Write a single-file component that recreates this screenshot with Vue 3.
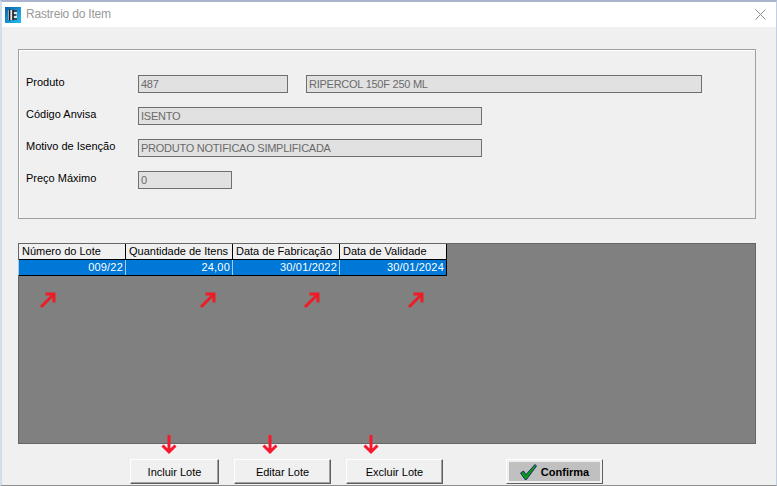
<script setup>
const columns = [
  { title: 'Número do Lote', value: '009/22' },
  { title: 'Quantidade de Itens', value: '24,00' },
  { title: 'Data de Fabricação', value: '30/01/2022' },
  { title: 'Data de Validade', value: '30/01/2024' }
]

const diagonalArrows = [38, 198, 302, 406]
const downArrows = [161, 262, 363]
const lotButtons = [
  { label: 'Incluir Lote', cls: 'btn-a' },
  { label: 'Editar Lote', cls: 'btn-b' },
  { label: 'Excluir Lote', cls: 'btn-b' }
]
</script>

<template>
  <div class="window">
    <header class="titlebar">
      <svg class="app-icon" width="16" height="16" viewBox="0 0 16 16">
        <defs>
          <linearGradient id="iconBg" x1="0" y1="0" x2="1" y2="1">
            <stop offset="0" stop-color="#0a5fa8" />
            <stop offset="1" stop-color="#22c0f4" />
          </linearGradient>
        </defs>
        <rect width="16" height="16" fill="url(#iconBg)" />
        <rect x="3" y="3" width="9" height="10" fill="#dfe6ea" />
        <path d="M4.5 2.5V13.5M8 3V13M8 4H12M8 8H11.5M8 12H12" stroke="#101c28" stroke-width="1.6" fill="none" />
      </svg>
      <span class="title">Rastreio do Item</span>
      <svg class="close" width="11" height="11" viewBox="0 0 11 11">
        <path d="M0.5 0.5L10.5 10.5M10.5 0.5L0.5 10.5" stroke="#8a8a8a" stroke-width="1" fill="none" />
      </svg>
    </header>

    <main class="content">
      <section class="group">
        <div class="row">
          <label>Produto</label>
          <div class="field w150">487</div>
          <div class="field w396 gap18">RIPERCOL 150F 250 ML</div>
        </div>
        <div class="row">
          <label>Código Anvisa</label>
          <div class="field w344">ISENTO</div>
        </div>
        <div class="row">
          <label>Motivo de Isenção</label>
          <div class="field w344">PRODUTO NOTIFICAO SIMPLIFICADA</div>
        </div>
        <div class="row">
          <label>Preço Máximo</label>
          <div class="field w94">0</div>
        </div>
      </section>

      <section class="grid">
        <div class="table">
          <div v-for="col in columns" :key="col.title" class="col">
            <div class="head">{{ col.title }}</div>
            <div class="cell">{{ col.value }}</div>
          </div>
        </div>
        <svg
          v-for="x in diagonalArrows"
          :key="x"
          class="arrow-diag"
          :style="{ left: x - 18 + 'px' }"
          width="18"
          height="18"
          viewBox="0 0 18 18"
        >
          <path d="M2 16L15 3M6.5 3H15V11.5" stroke="#ee1c25" stroke-width="3" fill="none" />
        </svg>
      </section>

      <footer class="actions">
        <button v-for="b in lotButtons" :key="b.label" class="btn" :class="b.cls">{{ b.label }}</button>
        <button class="btn confirm">
          <svg width="17" height="16" viewBox="0 0 17 16">
            <path d="M0.5 9L3.5 7L6 10.5L15 0.5L16.5 2L6.5 15.5H5Z" fill="#0c9a1c" stroke="#10106a" stroke-width="0.8" />
          </svg>
          <span>Confirma</span>
        </button>
      </footer>

      <svg
        v-for="x in downArrows"
        :key="x"
        class="arrow-down"
        :style="{ left: x - 2 + 'px' }"
        width="16"
        height="20"
        viewBox="0 0 16 20"
      >
        <path d="M8 0V17M1.5 10.5L8 17L14.5 10.5" stroke="#f8172c" stroke-width="3" fill="none" />
      </svg>
    </main>
  </div>
</template>

<style>
html, body {
  margin: 0;
  background: #f0f0f0;
}
</style>

<style scoped>
.window {
  position: relative;
  width: 777px;
  height: 486px;
  box-sizing: border-box;
  overflow: hidden;
  border-top: 2px solid #a9b5cf;
  border-left: 2px solid #d3deec;
  border-right: 1px solid #c3cfe0;
  border-bottom: 1px solid #8f8f8f;
  background: #f0f0f0;
  font-family: "Liberation Sans", Arial, sans-serif;
  font-size: 11px;
  color: #000;
}

.titlebar {
  display: flex;
  align-items: center;
  height: 25px;
  padding: 0 10px 0 3px;
  background: #fff;
}

.app-icon {
  flex: none;
}

.title {
  margin: -1px 0 0 5px;
  color: #999;
  font-size: 12px;
  letter-spacing: -0.2px;
}

.close {
  margin-left: auto;
}

.content {
  padding: 22px 20px 0 16px;
}

.group {
  box-sizing: border-box;
  height: 170px;
  padding: 25px 0 0 7px;
  border: 1px solid #a0a0a0;
  box-shadow: 1px 1px 0 #fff inset;
}

.row {
  display: flex;
  height: 18px;
  margin-bottom: 14px;
}

.row label {
  width: 112px;
  margin-top: -2px;
  line-height: 18px;
}

.field {
  box-sizing: border-box;
  height: 18px;
  padding-left: 2px;
  border: 1px solid #6f6f6f;
  background: #e1e1e1;
  color: #6a6a6a;
  line-height: 16px;
  letter-spacing: -0.25px;
  white-space: nowrap;
}

.w150 { width: 150px; }
.w396 { width: 396px; }
.w344 { width: 344px; }
.w94 { width: 94px; }
.gap18 { margin-left: 18px; }

.grid {
  position: relative;
  box-sizing: border-box;
  height: 201px;
  margin-top: 24px;
  border: 1px solid #666;
  background: #808080;
}

.table {
  display: inline-flex;
  border-right: 1px solid #000;
  border-bottom: 1px solid #000;
}

.col {
  box-sizing: border-box;
  width: 107px;
  border-right: 1px solid #000;
}

.col:last-child {
  width: 106px;
  border-right: 0;
}

.head {
  box-sizing: border-box;
  height: 16px;
  padding-left: 3px;
  border-bottom: 1px solid #000;
  background: #f0f0f0;
  line-height: 15px;
  white-space: nowrap;
}

.cell {
  box-sizing: border-box;
  height: 15px;
  padding-right: 2px;
  background: #0078d7;
  box-shadow: -1px 0 0 #a9c9e6;
  color: #fff;
  text-align: right;
  line-height: 14px;
  letter-spacing: 0.2px;
}

.arrow-diag {
  position: absolute;
  top: 47px;
}

.actions {
  display: flex;
  margin-top: 15px;
  padding-left: 112px;
}

.btn {
  box-sizing: border-box;
  width: 97px;
  height: 25px;
  margin-right: 15px;
  padding: 0;
  border: 1px solid;
  border-color: #fff #5f5f5f #5f5f5f #fff;
  box-shadow: inset -1px -1px 0 #a0a0a0;
  background: #f0f0f0;
  font: inherit;
  color: #000;
}

.btn-a {
  width: 89px;
}

.confirm {
  display: flex;
  align-items: center;
  justify-content: center;
  gap: 4px;
  margin: 0 0 0 48px;
  background: #c0c0c0;
  box-shadow: inset 0 0 0 2px #f0f0f0;
  font-weight: bold;
}

.arrow-down {
  position: absolute;
  top: 433px;
}
</style>
